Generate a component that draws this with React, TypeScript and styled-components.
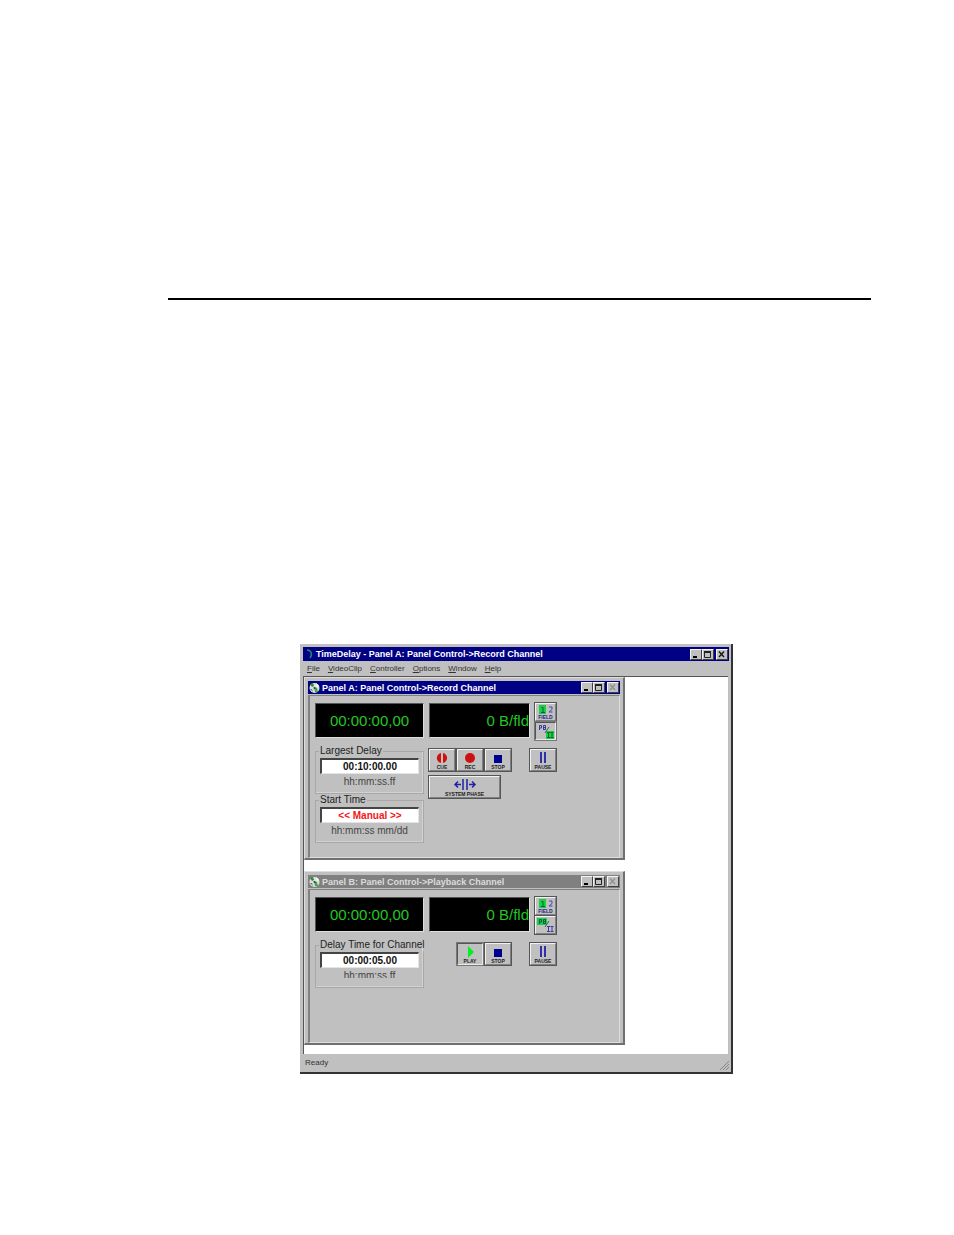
import React from "react";
import styled, { createGlobalStyle, css } from "styled-components";

const GlobalStyle = createGlobalStyle`
  *, *::before, *::after { box-sizing: border-box; }
  body { margin: 0; background: #fff; }
  button, input { font: inherit; color: inherit; }
`;

const FACE = "#c0c0c0";

const Page = styled.main`
  min-height: 100vh;
  padding: 298px 83px 160px 168px;
  font-family: "Liberation Sans", Arial, sans-serif;
  font-size: 10px;
  line-height: 12px;
  color: #222;
`;

const Rule = styled.hr`
  height: 2px;
  margin: 0 0 344px;
  border: 0;
  background: #000;
`;

const AppWindow = styled.section`
  display: flex;
  flex-direction: column;
  min-width: 400px;
  margin: 0 138px 0 132px;
  padding: 3px 2px 0 3px;
  background: ${FACE};
  border: solid #333;
  border-width: 0 2px 2px 0;
`;

const TitleBar = styled.header<{ $inactive?: boolean; $tall?: boolean }>`
  display: flex;
  align-items: center;
  gap: 2px;
  height: ${(p) => (p.$tall ? 14 : 13)}px;
  padding: 0 1px;
  background: ${(p) => (p.$inactive ? "#808080" : "#000084")};
  color: ${(p) => (p.$inactive ? "#dcdcdc" : "#fff")};
`;

const Title = styled.h1`
  flex: 1;
  margin: 0;
  font-size: 9px;
  line-height: 12px;
  font-weight: 700;
  white-space: nowrap;
`;

const CaptionButtons = styled.div`
  display: flex;
  align-items: center;
`;

const CaptionButton = styled.button<{ $apart?: boolean }>`
  display: block;
  width: 12px;
  height: 11px;
  margin-left: ${(p) => (p.$apart ? 2 : 0)}px;
  padding: 0;
  background: ${FACE};
  border: 1px solid;
  border-color: #f4f4f4 #404040 #404040 #f4f4f4;

  svg { display: block; }
`;

const MenuBar = styled.nav`
  display: flex;
  gap: 8px;
  height: 15px;
  padding: 1px 4px;
  font-size: 8px;
  line-height: 13px;
`;

const MenuItem = styled.button`
  padding: 0;
  border: 0;
  background: none;
  color: #333;

  &::first-letter { text-decoration: underline; }
`;

const Desktop = styled.div`
  display: flex;
  flex-direction: column;
  align-items: flex-start;
  gap: 11px;
  margin-right: 1px;
  padding-bottom: 9px;
  background: #fff;
  border-top: 1px solid #555;
  border-left: 1px solid #555;
`;

const StatusBar = styled.footer`
  display: flex;
  justify-content: space-between;
  align-items: flex-end;
  height: 18px;
  padding: 0 0 2px 2px;
  font-size: 8px;
  line-height: 14px;
  color: #333;
`;

const PanelFrame = styled.section<{ $tall?: boolean }>`
  width: 321px;
  height: ${(p) => (p.$tall ? 183 : 174)}px;
  padding: 3px 3px 2px;
  background: ${FACE};
  border: solid;
  border-width: 1px 2px 2px 1px;
  border-color: #dedede #707070 #707070 #dedede;
`;

const PanelBody = styled.div<{ $tall?: boolean }>`
  display: grid;
  grid-template-columns: 109px 101px 22px;
  align-content: start;
  column-gap: 5px;
  row-gap: 5px;
  height: ${(p) => (p.$tall ? 163 : 154)}px;
  margin-top: 1px;
  padding: 7px 0 0 5px;
  border: solid;
  border-width: 1px 1px 1px 2px;
  border-color: #808080 #dedede #dedede #808080;
`;

const Display = styled.output`
  display: flex;
  align-items: center;
  justify-content: center;
  height: 35px;
  background: #000;
  border: 1px solid #555;
  border-right-color: #ddd;
  border-bottom-color: #ddd;
  color: #22c822;
  font-size: 15px;
  line-height: 18px;
  white-space: nowrap;
`;

const RateDisplay = styled(Display)`
  justify-content: flex-end;
`;

const pressed = css`
  border-color: #555 #e8e8e8 #e8e8e8 #555;
  box-shadow: 0 0 0 1px #777;
`;

const raised = css`
  border-color: #f2f2f2 #808080 #808080 #f2f2f2;
  box-shadow: 0 0 0 1px #555;
`;

const ToggleStack = styled.div`
  display: flex;
  flex-direction: column;
  gap: 1px;
  padding-right: 1px;
`;

const ToolButton = styled.button<{ $pressed?: boolean }>`
  display: flex;
  flex-direction: column;
  align-items: center;
  justify-content: flex-end;
  padding: 0;
  background: ${FACE};
  border: 1px solid;
  font-size: 5px;
  line-height: 6px;
  font-weight: 700;
  color: #222;
  ${(p) => (p.$pressed ? pressed : raised)}

  svg { display: block; }
`;

const ToggleButton = styled(ToolButton)`
  height: 18px;
  color: #22228c;
`;

const TransportButton = styled(ToolButton)<{ $wide?: boolean }>`
  width: ${(p) => (p.$wide ? 71 : 26)}px;
  height: 22px;
`;

const Groups = styled.div`
  display: flex;
  flex-direction: column;
`;

const Group = styled.fieldset`
  min-width: 0;
  height: 49px;
  margin: 0;
  padding: 1px 4px 0;
  border: 1px solid #a8a8a8;
  box-shadow: inset -1px -1px 0 #d2d2d2;
`;

const Legend = styled.legend`
  margin-left: -1px;
  padding: 0 1px;
  white-space: nowrap;
`;

const TimeInput = styled.input<{ $alert?: boolean }>`
  display: block;
  width: 100%;
  height: 16px;
  padding: 0;
  background: #fff;
  border: solid;
  border-width: 2px 1px 1px 2px;
  border-color: #444 #e4e4e4 #e4e4e4 #444;
  border-radius: 0;
  color: ${(p) => (p.$alert ? "#f01818" : "#111")};
  font-weight: 700;
  text-align: center;
`;

const Hint = styled.p<{ $clipped?: boolean }>`
  height: ${(p) => (p.$clipped ? 8 : 12)}px;
  margin: 2px 0 0;
  overflow: hidden;
  text-align: center;
  color: #444;
`;

const Transport = styled.div`
  display: flex;
  flex-direction: column;
  grid-column: 2 / 4;
  gap: 5px;
  padding: 4px 1px 0 0;
`;

const ButtonRow = styled.div<{ $indent?: boolean }>`
  display: flex;
  gap: 2px;
  padding-left: ${(p) => (p.$indent ? 28 : 0)}px;

  > :nth-child(n + 2):last-child { margin-left: auto; }
`;

function Caption({ inactiveClose }: { inactiveClose?: boolean }) {
  return (
    <CaptionButtons>
      <CaptionButton aria-label="Minimize">
        <svg width="10" height="9"><path d="M2 7h4" stroke="#000" strokeWidth="2" /></svg>
      </CaptionButton>
      <CaptionButton aria-label="Maximize">
        <svg width="10" height="9">
          <path d="M1.5 1.5h6v6h-6z" fill="none" stroke="#222" />
          <path d="M1 2h7" stroke="#222" strokeWidth="2" />
        </svg>
      </CaptionButton>
      <CaptionButton $apart aria-label="Close">
        <svg width="10" height="9">
          <path d="M2 1.5l5 5.5M7 1.5l-5 5.5" stroke={inactiveClose ? "#909090" : "#111"} strokeWidth="1.3" />
        </svg>
      </CaptionButton>
    </CaptionButtons>
  );
}

function DiscIcon() {
  return (
    <svg width="11" height="12" viewBox="0 0 11 12" aria-hidden="true">
      <circle cx="5.5" cy="6" r="5" fill="#d8e4d8" />
      <path d="M1 2l3-1 1 3-2 1z" fill="#2a8a3a" />
      <path d="M5 5l3 1 1 4-3 0z" fill="#3aa84a" />
      <path d="M7 1l3 3-2 1z" fill="#fff" />
      <path d="M1 7l2 0 1 3z" fill="#7a5a9a" />
      <circle cx="5.5" cy="6" r="1" fill="#334" />
    </svg>
  );
}

function FieldIcon() {
  return (
    <svg width="18" height="9" viewBox="0 0 18 9" aria-hidden="true">
      <path d="M2 0h7v9H2z" fill="#18d040" />
      <path d="M4.5 2.5h1.5V7M4 7.5h4" fill="none" stroke="#145a50" />
      <path d="M12 2h3v2.5l-3 2.5h3.5" fill="none" stroke="#4848a8" />
    </svg>
  );
}

function PlaybackIcon({ playback }: { playback?: boolean }) {
  return (
    <svg width="19" height="16" viewBox="0 0 19 16" aria-hidden="true">
      <path d={playback ? "M1 1h10v7H1z" : "M10 8h8v8h-8z"} fill="#18d040" />
      <path
        d="M3.5 7V2.5h2v2.5h-2M7.5 7V2.5h2v4h-2M7.5 4.5h2"
        fill="none"
        stroke={playback ? "#145a50" : "#3838a0"}
      />
      <path d="M13 4l-4 6" stroke="#555" />
      <path
        d="M11 9.5h3M12.5 9.5v5M11 14.5h3M14.5 9.5h3M16 9.5v5M14.5 14.5h3"
        fill="none"
        stroke={playback ? "#3838a0" : "#0c6a30"}
      />
    </svg>
  );
}

type Glyph = "cue" | "rec" | "stop" | "pause" | "play";

function TransportIcon({ glyph }: { glyph: Glyph }) {
  return (
    <svg width="16" height="13" viewBox="0 0 16 13" aria-hidden="true">
      {glyph === "cue" && (
        <path d="M7 2v10C1.5 10.5 1.5 3.500 7 2zM9 2v10c5.5-1.5 5.5-8.500 0-10z" fill="#cc1111" />
      )}
      {glyph === "rec" && <circle cx="8" cy="7" r="5" fill="#cc1111" />}
      {glyph === "stop" && <path d="M4 4h8v8H4z" fill="#000090" />}
      {glyph === "pause" && <path d="M6 1v11M10 1v11" stroke="#3030a8" strokeWidth="2" />}
      {glyph === "play" && <path d="M6 1l6 6-6 6z" fill="#00f020" />}
    </svg>
  );
}

function PhaseIcon() {
  return (
    <svg width="24" height="13" viewBox="0 0 24 13" aria-hidden="true">
      <path d="M10 1v11M14 1v11" stroke="#2020a8" strokeWidth="1.5" />
      <path d="M8 6.5H2M5 3.5l-3 3 3 3M16 6.5h6M19 3.5l3 3-3 3" fill="none" stroke="#2020a8" strokeWidth="1.5" />
    </svg>
  );
}

function Transporter({ glyph, label, active }: { glyph: Glyph; label: string; active?: boolean }) {
  return (
    <TransportButton $pressed={active}>
      <TransportIcon glyph={glyph} />
      {label}
    </TransportButton>
  );
}

function TimeGroup(p: { legend: string; value: string; hint: string; alert?: boolean; clipped?: boolean }) {
  return (
    <Group>
      <Legend>{p.legend}</Legend>
      <TimeInput aria-label={p.legend} defaultValue={p.value} $alert={p.alert} />
      <Hint $clipped={p.clipped}>{p.hint}</Hint>
    </Group>
  );
}

function Panel(p: {
  title: string;
  record?: boolean;
  groups: React.ReactNode;
  children: React.ReactNode;
}) {
  return (
    <PanelFrame $tall={p.record}>
      <TitleBar $inactive={!p.record}>
        <DiscIcon />
        <Title as="h2">{p.title}</Title>
        <Caption inactiveClose />
      </TitleBar>
      <PanelBody $tall={p.record}>
        <Display>00:00:00,00</Display>
        <RateDisplay>0 B/fld</RateDisplay>
        <ToggleStack>
          <ToggleButton>
            <FieldIcon />
            FIELD
          </ToggleButton>
          <ToggleButton $pressed={p.record} aria-label="PB/EE">
            <PlaybackIcon playback={!p.record} />
          </ToggleButton>
        </ToggleStack>
        <Groups>{p.groups}</Groups>
        <Transport>{p.children}</Transport>
      </PanelBody>
    </PanelFrame>
  );
}

export default function App() {
  return (
    <>
      <GlobalStyle />
      <Page>
        <Rule />
        <AppWindow>
          <TitleBar $tall>
            <svg width="10" height="12" viewBox="0 0 10 12" aria-hidden="true">
              <path d="M3 2c4 0 6 4 3 8" fill="none" stroke="#1a8a7a" strokeWidth="1.5" />
            </svg>
            <Title>TimeDelay - Panel A: Panel Control-&gt;Record Channel</Title>
            <Caption />
          </TitleBar>
          <MenuBar>
            {["File", "VideoClip", "Controller", "Options", "Window", "Help"].map((m) => (
              <MenuItem key={m}>{m}</MenuItem>
            ))}
          </MenuBar>
          <Desktop>
            <Panel
              record
              title="Panel A: Panel Control->Record Channel"
              groups={
                <>
                  <TimeGroup legend="Largest Delay" value="00:10:00.00" hint="hh:mm:ss.ff" />
                  <TimeGroup legend="Start Time" value="<< Manual >>" hint="hh:mm:ss mm/dd" alert />
                </>
              }
            >
              <ButtonRow>
                <Transporter glyph="cue" label="CUE" />
                <Transporter glyph="rec" label="REC" />
                <Transporter glyph="stop" label="STOP" />
                <Transporter glyph="pause" label="PAUSE" />
              </ButtonRow>
              <ButtonRow>
                <TransportButton $wide>
                  <PhaseIcon />
                  SYSTEM PHASE
                </TransportButton>
              </ButtonRow>
            </Panel>
            <Panel
              title="Panel B: Panel Control->Playback Channel"
              groups={<TimeGroup legend="Delay Time for Channel" value="00:00:05.00" hint="hh:mm:ss.ff" clipped />}
            >
              <ButtonRow $indent>
                <Transporter glyph="play" label="PLAY" active />
                <Transporter glyph="stop" label="STOP" />
                <Transporter glyph="pause" label="PAUSE" />
              </ButtonRow>
            </Panel>
          </Desktop>
          <StatusBar>
            <span>Ready</span>
            <svg width="10" height="10" viewBox="0 0 10 10" aria-hidden="true">
              <path d="M1 10l9-9M4 10l6-6M7 10l3-3" stroke="#888" />
            </svg>
          </StatusBar>
        </AppWindow>
      </Page>
    </>
  );
}
